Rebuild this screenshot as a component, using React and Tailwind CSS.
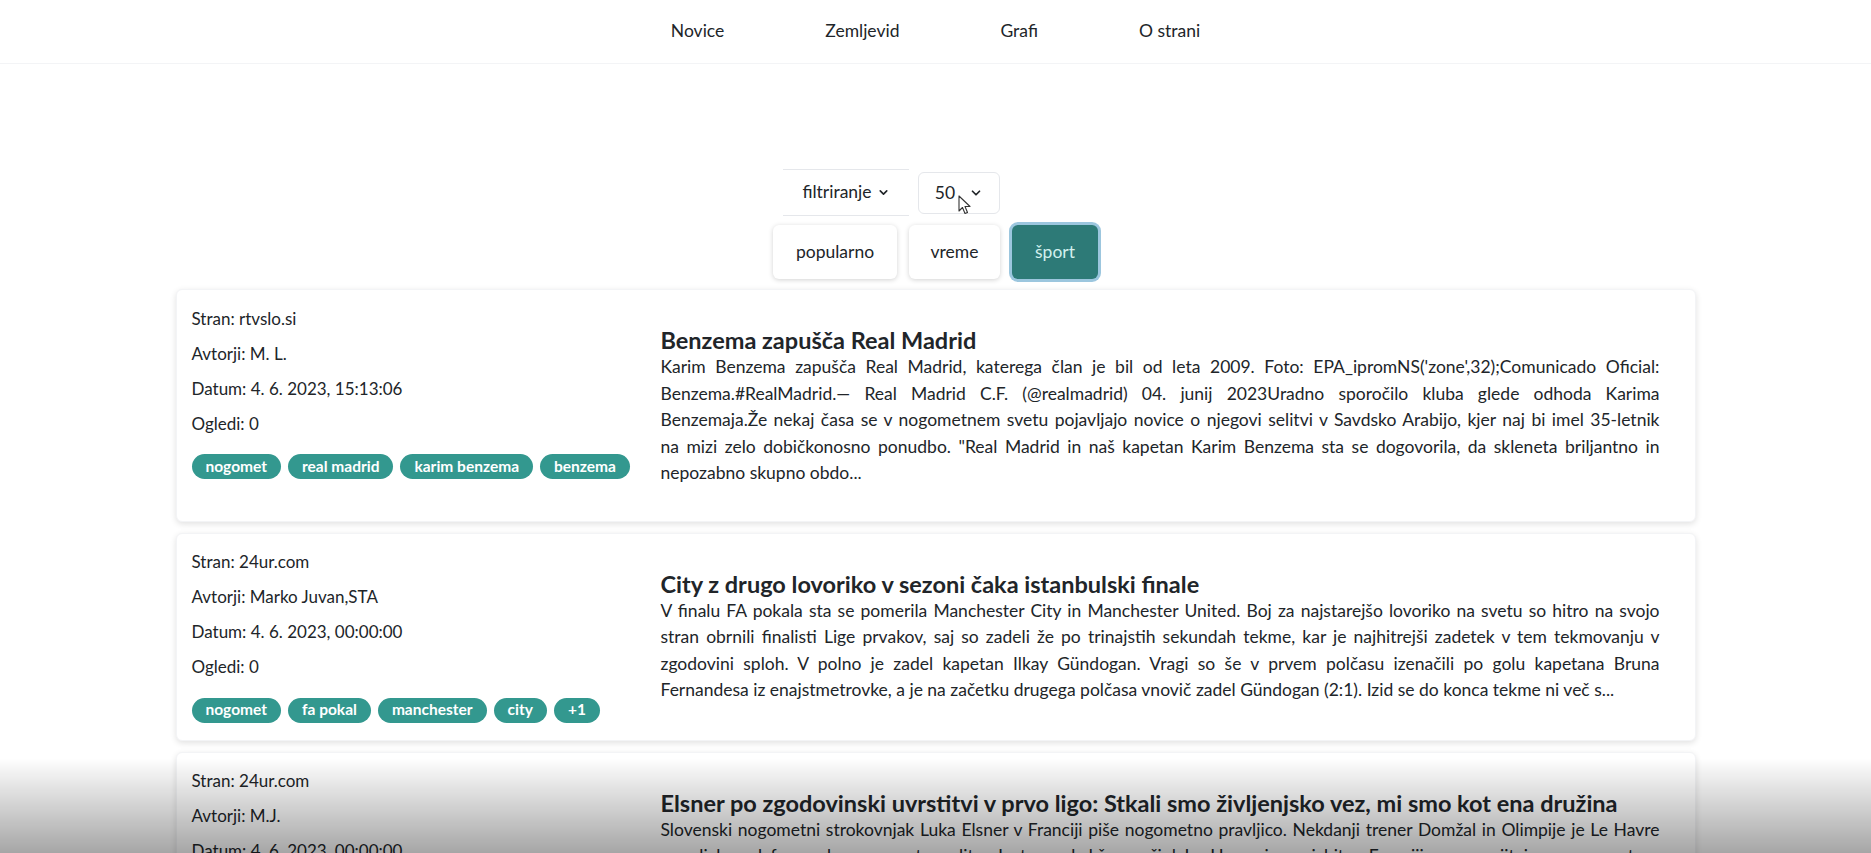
import React from 'react'
import { ChevronDown } from 'lucide-react'

// body text is kept in the same lines as the source page, each one justified
const articles = [
  {
    site: 'rtvslo.si',
    authors: 'M. L.',
    date: '4. 6. 2023, 15:13:06',
    views: 0,
    tags: ['nogomet', 'real madrid', 'karim benzema', 'benzema'],
    title: 'Benzema zapušča Real Madrid',
    lines: [
      'Karim Benzema zapušča Real Madrid, katerega član je bil od leta 2009. Foto: EPA_ipromNS(\'zone\',32);Comunicado Oficial:',
      'Benzema.#RealMadrid.— Real Madrid C.F. (@realmadrid) 04. junij 2023Uradno sporočilo kluba glede odhoda Karima',
      'Benzemaja.Že nekaj časa se v nogometnem svetu pojavljajo novice o njegovi selitvi v Savdsko Arabijo, kjer naj bi imel 35-letnik',
      'na mizi zelo dobičkonosno ponudbo. "Real Madrid in naš kapetan Karim Benzema sta se dogovorila, da skleneta briljantno in',
      'nepozabno skupno obdo...',
    ],
  },
  {
    site: '24ur.com',
    authors: 'Marko Juvan,STA',
    date: '4. 6. 2023, 00:00:00',
    views: 0,
    tags: ['nogomet', 'fa pokal', 'manchester', 'city', '+1'],
    title: 'City z drugo lovoriko v sezoni čaka istanbulski finale',
    lines: [
      'V finalu FA pokala sta se pomerila Manchester City in Manchester United. Boj za najstarejšo lovoriko na svetu so hitro na svojo',
      'stran obrnili finalisti Lige prvakov, saj so zadeli že po trinajstih sekundah tekme, kar je najhitrejši zadetek v tem tekmovanju v',
      'zgodovini sploh. V polno je zadel kapetan Ilkay Gündogan. Vragi so še v prvem polčasu izenačili po golu kapetana Bruna',
      'Fernandesa iz enajstmetrovke, a je na začetku drugega polčasa vnovič zadel Gündogan (2:1). Izid se do konca tekme ni več s...',
    ],
  },
  {
    site: '24ur.com',
    authors: 'M.J.',
    date: '4. 6. 2023, 00:00:00',
    views: 0,
    tags: ['nogomet', 'le havre', 'luka elsner'],
    title: 'Elsner po zgodovinski uvrstitvi v prvo ligo: Stkali smo življenjsko vez, mi smo kot ena družina',
    lines: [
      'Slovenski nogometni strokovnjak Luka Elsner v Franciji piše nogometno pravljico. Nekdanji trener Domžal in Olimpije je Le Havre',
      'popeljal med francosko nogometno elito. Je to pa kakšen začin! Le Havre je prvi hit v Franciji, po osvojitvi prvega mesta v',
      'drugi ligi pa so navijači slavili vso noč in pripravili sprejem, ki ga ne bodo kmalu pozabili...',
    ],
  },
]

const Card = ({ a }) => {
  return (
    <div className="w-[1520px] mx-auto flex items-start bg-white rounded-md border border-gray-100 shadow-[0_2px_6px_rgba(0,0,0,0.12)]">
      <div className="w-[484px] shrink-0 pl-[15px] pt-[11px] pb-[17px] text-[17px] text-[#212529]">
        <div className="h-[35px] flex items-center">Stran: {a.site}</div>
        <div className="h-[35px] flex items-center">Avtorji: {a.authors}</div>
        <div className="h-[35px] flex items-center">Datum: {a.date}</div>
        <div className="h-[35px] flex items-center">Ogledi: {a.views}</div>
        <div className="flex gap-[7px] mt-[13px]">
          {a.tags.map((t) => (
            <span key={t} className="h-[25px] px-[14px] rounded-full bg-[#33988f] text-white text-[15.5px] font-bold flex items-center">
              {t}
            </span>
          ))}
        </div>
      </div>
      <div className="flex-1 pt-[36px] pb-[34px] pr-[35px] text-[#212529]">
        <h2 className="text-[23.5px] font-bold leading-[28px]">{a.title}</h2>
        <div className="text-[17.5px] leading-[26.5px]">
          {a.lines.map((l, i) => (
            <div key={i} className={i < a.lines.length - 1 ? 'text-justify [text-align-last:justify]' : ''}>
              {l}
            </div>
          ))}
        </div>
      </div>
    </div>
  )
}

const App = () => {
  return (
    <div className="relative min-h-[853px] bg-white font-['Lato','Liberation_Sans',sans-serif] text-[#212529]">
      <nav className="h-[64px] border-b border-gray-100 flex items-center justify-center gap-[101px] text-[17.5px]">
        <a>Novice</a>
        <a>Zemljevid</a>
        <a>Grafi</a>
        <a>O strani</a>
      </nav>

      <div className="flex justify-center mt-[105px]">
        <div className="flex flex-col items-start">
          <div className="flex items-start gap-[9px] ml-[10px]">
            <button className="w-[126px] h-[47px] border-y border-gray-200 flex items-center justify-center gap-[5px] text-[17.5px]">
              filtriranje <ChevronDown size={13} strokeWidth={3} />
            </button>
            <div className="relative mt-[3px] w-[82px] h-[42px] rounded-md border border-gray-200 flex items-center justify-center gap-[14px] text-[17.5px]">
              <span>50</span>
              <ChevronDown size={14} strokeWidth={3} />
              <svg className="absolute left-[39px] top-[22px]" width="14" height="20" viewBox="0 0 14 20">
                <path d="M1 1 L1 16 L4.5 12.5 L7 18.5 L9.5 17.5 L7 11.5 L12 11.5 Z" fill="white" stroke="#333" strokeWidth="1.1" strokeLinejoin="round" />
              </svg>
            </div>
          </div>
          <div className="flex gap-[12px] mt-[9px]">
            <button className="w-[124px] h-[54px] rounded-md bg-white shadow-[0_1px_5px_rgba(0,0,0,0.18)] text-[17.5px]">popularno</button>
            <button className="w-[91px] h-[54px] rounded-md bg-white shadow-[0_1px_5px_rgba(0,0,0,0.18)] text-[17.5px]">vreme</button>
            <button className="w-[86px] h-[54px] rounded-md bg-[#2d7a77] text-[#d3f0ee] ring-[3px] ring-[#9cc6de] text-[17.5px]">šport</button>
          </div>
        </div>
      </div>

      <div className="flex flex-col gap-[11px] mt-[10px] pb-10">
        {articles.map((a) => (
          <Card key={a.title} a={a} />
        ))}
      </div>

      <div className="fixed bottom-0 inset-x-0 h-[95px] bg-gradient-to-b from-transparent to-black/35 pointer-events-none" />
    </div>
  )
}

export default App
